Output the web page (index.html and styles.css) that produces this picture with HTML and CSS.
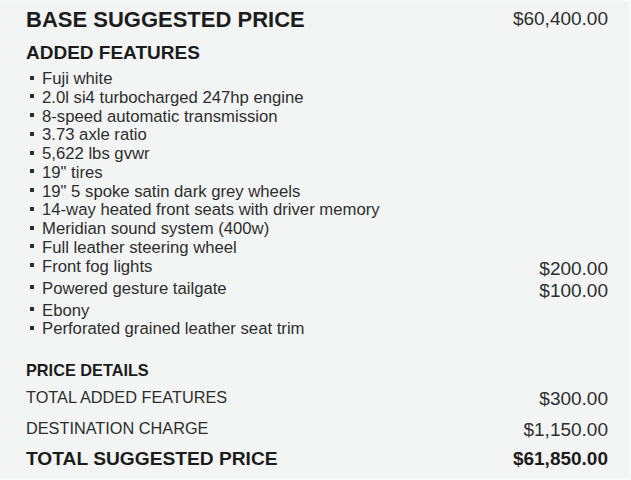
FILE: index.html
```html
<!DOCTYPE html>
<html lang="en">
<head>
<meta charset="utf-8">
<title>Price summary</title>
<link rel="stylesheet" href="styles.css">
</head>
<body>
<div class="panel">
  <div class="base-row">
    <h1 class="base-label">BASE SUGGESTED PRICE</h1>
    <span class="base-price">$60,400.00</span>
  </div>

  <h2 class="section-title">ADDED FEATURES</h2>
  <ul class="features">
    <li class="feature"><span class="feature-name">Fuji white</span></li>
    <li class="feature"><span class="feature-name">2.0l si4 turbocharged 247hp engine</span></li>
    <li class="feature"><span class="feature-name">8-speed automatic transmission</span></li>
    <li class="feature"><span class="feature-name">3.73 axle ratio</span></li>
    <li class="feature"><span class="feature-name">5,622 lbs gvwr</span></li>
    <li class="feature"><span class="feature-name">19" tires</span></li>
    <li class="feature"><span class="feature-name">19" 5 spoke satin dark grey wheels</span></li>
    <li class="feature"><span class="feature-name">14-way heated front seats with driver memory</span></li>
    <li class="feature"><span class="feature-name">Meridian sound system (400w)</span></li>
    <li class="feature"><span class="feature-name">Full leather steering wheel</span></li>
    <li class="feature feature-priced"><span class="feature-name">Front fog lights</span><span class="feature-price">$200.00</span></li>
    <li class="feature feature-priced"><span class="feature-name">Powered gesture tailgate</span><span class="feature-price">$100.00</span></li>
    <li class="feature"><span class="feature-name">Ebony</span></li>
    <li class="feature"><span class="feature-name">Perforated grained leather seat trim</span></li>
  </ul>

  <h3 class="details-title">PRICE DETAILS</h3>
  <div class="detail-row">
    <span class="detail-label">TOTAL ADDED FEATURES</span>
    <span class="detail-price">$300.00</span>
  </div>
  <div class="detail-row">
    <span class="detail-label">DESTINATION CHARGE</span>
    <span class="detail-price">$1,150.00</span>
  </div>
  <div class="detail-row total-row">
    <span class="total-label">TOTAL SUGGESTED PRICE</span>
    <span class="total-price">$61,850.00</span>
  </div>
</div>
</body>
</html>
```

FILE: styles.css
```css
html, body {
  margin: 0;
  padding: 0;
  background: #f9fafa;
}

body {
  font-family: "Liberation Sans", Arial, sans-serif;
  color: #2e2e2e;
}

.panel {
  box-sizing: border-box;
  width: 629px;
  height: 477px;
  margin: 1px 0 0 0;
  background: #f2f5f4;
  padding: 6px 21px 0 26px;
  display: flex;
  flex-direction: column;
}

.base-row {
  display: flex;
  justify-content: space-between;
  align-items: flex-start;
}

.base-label {
  margin: 0;
  font-size: 22px;
  line-height: 25px;
  font-weight: bold;
  color: #1c1c1c;
}

.base-price {
  font-size: 19px;
  line-height: 22px;
  padding-top: 1px;
  color: #2e2e2e;
}

.section-title {
  margin: 10px 0 6px 0;
  font-size: 19px;
  line-height: 22px;
  font-weight: bold;
  color: #1c1c1c;
}

.features {
  list-style: none;
  margin: 0;
  padding: 0;
}

.feature {
  display: flex;
  justify-content: space-between;
  align-items: flex-start;
  font-size: 16.7px;
  line-height: 18.75px;
  color: #2e2e2e;
}

.feature-name {
  position: relative;
  padding-left: 16px;
}

.feature-name::before {
  content: "";
  position: absolute;
  left: 4px;
  top: 5.5px;
  width: 4px;
  height: 4px;
  background: #2e2e2e;
}

.feature-price {
  font-size: 19px;
  line-height: 22px;
}

.details-title {
  margin: 22px 0 8px 0;
  font-size: 16.3px;
  line-height: 19px;
  font-weight: bold;
  color: #1c1c1c;
}

.detail-row {
  display: flex;
  justify-content: space-between;
  align-items: flex-start;
  margin-bottom: 8.5px;
}

.detail-label {
  font-size: 16.3px;
  line-height: 19px;
  color: #2e2e2e;
}

.detail-price {
  font-size: 19px;
  line-height: 22px;
  color: #2e2e2e;
}

.total-row {
  align-items: baseline;
  margin-top: -1px;
}

.total-label {
  font-size: 19.2px;
  line-height: 22px;
  font-weight: bold;
  color: #1c1c1c;
}

.total-price {
  font-size: 19px;
  line-height: 22px;
  font-weight: bold;
  color: #1c1c1c;
}
```
